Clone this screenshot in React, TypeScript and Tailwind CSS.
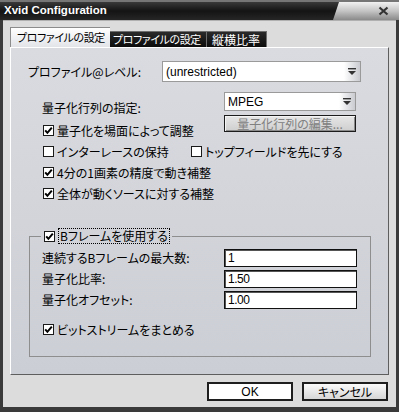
import React from "react";

const jp =
  "font-['Noto_Sans_CJK_JP','Noto_Sans_CJK_SC',sans-serif] [font-feature-settings:'palt'] leading-none whitespace-nowrap";

function Box({ checked }: { checked: boolean }) {
  return (
    <span className="ml-[1px] w-[11px] h-[11px] bg-white border border-[#1a1a1a] flex items-center justify-center shrink-0">
      {checked && (
        <svg width="9" height="9" viewBox="0 0 9 9">
          <path d="M1.2 4.3 L3.4 6.8 L7.8 1.6" stroke="#000" strokeWidth="2" fill="none" />
        </svg>
      )}
    </span>
  );
}

function CheckRow({ checked, label, className = "" }: { checked: boolean; label: string; className?: string }) {
  return (
    <div className={`flex items-center h-[21px] ${className}`}>
      <Box checked={checked} />
      <span className={`${jp} text-[12px] text-black ml-[3px]`}>{label}</span>
    </div>
  );
}

function Arrow() {
  return (
    <svg width="8" height="7" viewBox="0 0 8 7">
      <rect x="0" y="0" width="8" height="1.4" fill="#333" />
      <polygon points="0,3 8,3 4,7" fill="#333" />
    </svg>
  );
}

function Select({ value, w, h }: { value: string; w: string; h: string }) {
  return (
    <div className={`${w} ${h} bg-white border border-[#9a9a9a] flex items-stretch`}>
      <div className="flex-1 flex items-center pl-[3px] font-['Liberation_Sans','Noto_Sans_CJK_JP',sans-serif] text-[12px] leading-none text-black">{value}</div>
      <div className="w-[16px] flex items-center justify-center bg-gradient-to-r from-[#ffffff] to-[#c9cbd0]">
        <Arrow />
      </div>
    </div>
  );
}

function Input({ value }: { value: string }) {
  return (
    <div className="w-[133px] h-[18px] bg-white border border-[#111] shadow-[inset_1px_1px_0_#555] flex items-center pl-[3px]">
      <span className="font-['Liberation_Sans',sans-serif] text-[12px] leading-none tracking-[-0.5px] text-black">{value}</span>
    </div>
  );
}

export default function App() {
  return (
    <div className="w-[399px] h-[412px] flex flex-col bg-[#3a3a3a] overflow-hidden">
      {/* title bar */}
      <div className="h-[20px] shrink-0 flex border-t-[2px] border-[#767676] bg-gradient-to-b from-[#3a3a3a] via-[#141414] to-[#262626]">
        <div className="flex-1 flex items-center pl-[4px]">
          <span className="font-['Liberation_Sans',sans-serif] font-bold text-[11.5px] text-white leading-none">Xvid Configuration</span>
        </div>
        <div className="w-[66px] flex items-center justify-end pr-[10px] bg-gradient-to-b from-[#f2f2f2] via-[#c4c4c4] to-[#8a8a8a] [clip-path:polygon(6px_0,100%_0,100%_100%,0_100%)]">
          <svg width="11" height="10" viewBox="0 0 11 10">
            <path d="M1.5 1.5 L9.5 8.5 M9.5 1.5 L1.5 8.5" stroke="#333" strokeWidth="2.2" />
          </svg>
        </div>
      </div>

      {/* body */}
      <div className="flex-1 ml-[3px] mr-[3px] mb-[5px] bg-[#dcdcdd] border-t border-[#b0b0b0] flex flex-col">
        {/* tabs */}
        <div className="mt-[6px] ml-[7px] flex items-end h-[20px]">
          <div className="w-[100px] h-[20px] bg-gradient-to-b from-[#ffffff] to-[#e2e4e8] border-l border-t border-[#8c8c8c] flex items-center pl-[6px] overflow-hidden">
            <span className={`${jp} text-[11px] tracking-[-0.4px] text-black`}>プロファイルの設定</span>
          </div>
          <div className="w-[97px] h-[16px] bg-gradient-to-b from-[#2a2a2a] to-[#0c0c0c] border-t border-r border-[#6e6e6e] flex items-center pl-[3px] overflow-hidden">
            <span className={`${jp} text-[11px] tracking-[-0.4px] text-white`}>プロファイルの設定</span>
          </div>
          <div className="w-[60px] h-[16px] bg-gradient-to-b from-[#2a2a2a] to-[#0c0c0c] border-t border-r border-[#6e6e6e] flex items-center pl-[5px] overflow-hidden">
            <span className={`${jp} text-[12px] text-white`}>縦横比率</span>
          </div>
        </div>

        {/* panel */}
        <div className="ml-[7px] w-[379px] h-[328px] border-l border-t border-white border-r border-b border-r-[#5e5e5e] border-b-[#5e5e5e] bg-gradient-to-b from-[#d9dbe0] to-[#ccced5] flex flex-col">
          <div className="mt-[13px] flex items-center h-[21px]">
            <div className={`${jp} text-[12px] text-black pl-[17px] w-[151px]`}>プロファイル@レベル:</div>
            <Select value="(unrestricted)" w="w-[199px]" h="h-[21px]" />
          </div>

          <div className="mt-[10px] flex items-start ml-[31px]">
            <div className="w-[182px] pt-[5px] flex flex-col">
              <div className={`${jp} text-[12px] text-black h-[22px] flex items-center`}>量子化行列の指定:</div>
              <CheckRow checked label="量子化を場面によって調整" className="mt-[1px]" />
            </div>
            <div className="w-[132px] flex flex-col">
              <Select value="MPEG" w="w-[132px]" h="h-[19px]" />
              <div className="mt-[4px] h-[17px] border border-[#1c1c1c] shadow-[inset_1px_1px_0_#f4f4f4,inset_-1px_-1px_0_#8a8a8a] bg-gradient-to-b from-[#e6e6e6] to-[#cfcfcf] flex items-center justify-center">
                <span className={`${jp} text-[12px] text-[#808080]`}>量子化行列の編集...</span>
              </div>
            </div>
          </div>

          <div className="ml-[31px] flex">
            <CheckRow checked={false} label="インターレースの保持" className="w-[148px]" />
            <CheckRow checked={false} label="トップフィールドを先にする" />
          </div>
          <CheckRow checked label="4分の1画素の精度で動き補整" className="ml-[31px]" />
          <CheckRow checked label="全体が動くソースに対する補整" className="ml-[31px]" />

          <fieldset className="mt-[24px] ml-[18px] w-[342px] h-[129px] border border-[#8e8e8e] flex flex-col">
            <legend className="ml-[11px] px-[2px] flex items-center h-[16px]">
              <Box checked />
              <span className={`${jp} text-[12px] text-black ml-[3px] px-[1px] py-[1px] border border-dotted border-black`}>Bフレームを使用する</span>
            </legend>
            <div className="pt-[5px] pl-[12px] flex flex-col gap-[3px]">
              <div className="flex items-center h-[18px]">
                <div className={`${jp} text-[12px] text-black w-[182px]`}>連続するBフレームの最大数:</div>
                <Input value="1" />
              </div>
              <div className="flex items-center h-[18px]">
                <div className={`${jp} text-[12px] text-black w-[182px]`}>量子化比率:</div>
                <Input value="1.50" />
              </div>
              <div className="flex items-center h-[18px]">
                <div className={`${jp} text-[12px] text-black w-[182px]`}>量子化オフセット:</div>
                <Input value="1.00" />
              </div>
            </div>
            <CheckRow checked label="ビットストリームをまとめる" className="ml-[12px] mt-[10px]" />
          </fieldset>
        </div>

        {/* buttons */}
        <div className="mt-[7px] flex justify-end gap-[9px] pr-[8px]">
          <div className="w-[86px] h-[19px] bg-white border-[2px] border-[#1e1e1e] flex items-center justify-center">
            <span className="font-['Liberation_Sans',sans-serif] text-[12px] leading-none text-black">OK</span>
          </div>
          <div className="w-[86px] h-[19px] bg-gradient-to-b from-[#fbfbfb] to-[#d6d6d6] border-[2px] border-[#1e1e1e] flex items-center justify-center">
            <span className={`${jp} text-[12px] text-black`}>キャンセル</span>
          </div>
        </div>
      </div>
    </div>
  );
}
